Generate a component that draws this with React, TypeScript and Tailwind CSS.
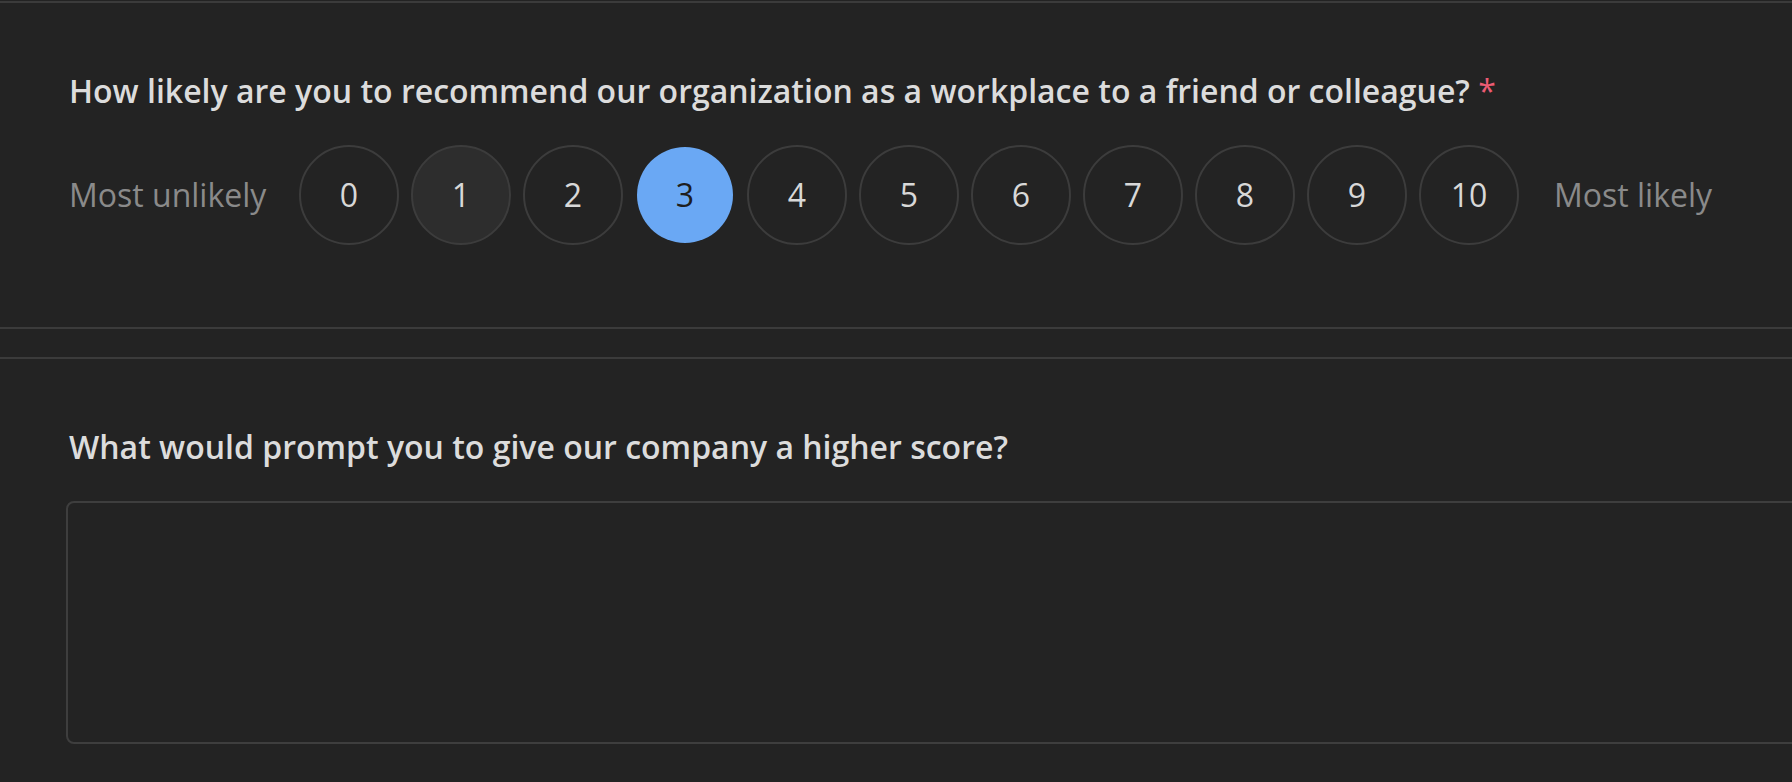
import React from "react";

export default function App() {
  const nums = [0, 1, 2, 3, 4, 5, 6, 7, 8, 9, 10];
  const selected = 3;
  const hovered = 1;
  return (
    <div className="min-h-screen w-full overflow-hidden bg-[#232323] pt-[1px] font-['Open_Sans',sans-serif]">
      <div className="border-t-2 border-b-2 border-[#3b3b3b]">
        <div className="pl-[69px] pt-[64px] pb-[82px]">
          <p className="text-[32px] leading-[48px] font-semibold text-[#dcdcdc] whitespace-nowrap">
            How likely are you to recommend our organization as a workplace to a friend or colleague?{" "}
            <span className="font-normal text-[#ec5b73]">*</span>
          </p>
          <div className="mt-[30px] flex h-[100px] items-center">
            <div className="w-[230px] shrink-0 text-[32px] leading-[48px] text-[#8a8a8a] whitespace-nowrap">
              Most unlikely
            </div>
            <div className="flex items-center gap-[12px]">
              {nums.map((n) =>
                n === selected ? (
                  <div
                    key={n}
                    className="flex h-[100px] w-[100px] shrink-0 items-center justify-center"
                  >
                    <div className="flex h-[96px] w-[96px] items-center justify-center rounded-full bg-[#6aa8f4] text-[32px] font-medium text-[#1e1e1e]">
                      {n}
                    </div>
                  </div>
                ) : (
                  <div
                    key={n}
                    className={
                      n === hovered
                        ? "flex h-[100px] w-[100px] shrink-0 items-center justify-center rounded-full border-2 border-[#3c3c3c] bg-[#2d2d2d] text-[32px] text-[#d8d8d8]"
                        : "flex h-[100px] w-[100px] shrink-0 items-center justify-center rounded-full border-2 border-[#3c3c3c] text-[32px] text-[#d8d8d8]"
                    }
                  >
                    {n}
                  </div>
                )
              )}
            </div>
            <div className="ml-[35px] text-[32px] leading-[48px] text-[#8a8a8a] whitespace-nowrap">
              Most likely
            </div>
          </div>
        </div>
      </div>
      <div className="mt-[28px] border-t-2 border-[#3b3b3b]">
        <div className="pl-[66px] pt-[64px]">
          <p className="pl-[3px] text-[32px] leading-[48px] font-semibold text-[#dcdcdc] whitespace-nowrap">
            What would prompt you to give our company a higher score?
          </p>
          <textarea className="mt-[30px] block h-[243px] w-[1800px] resize-none rounded-[8px] border-2 border-[#3e3e3e] bg-[#232323] outline-none" />
        </div>
      </div>
    </div>
  );
}
